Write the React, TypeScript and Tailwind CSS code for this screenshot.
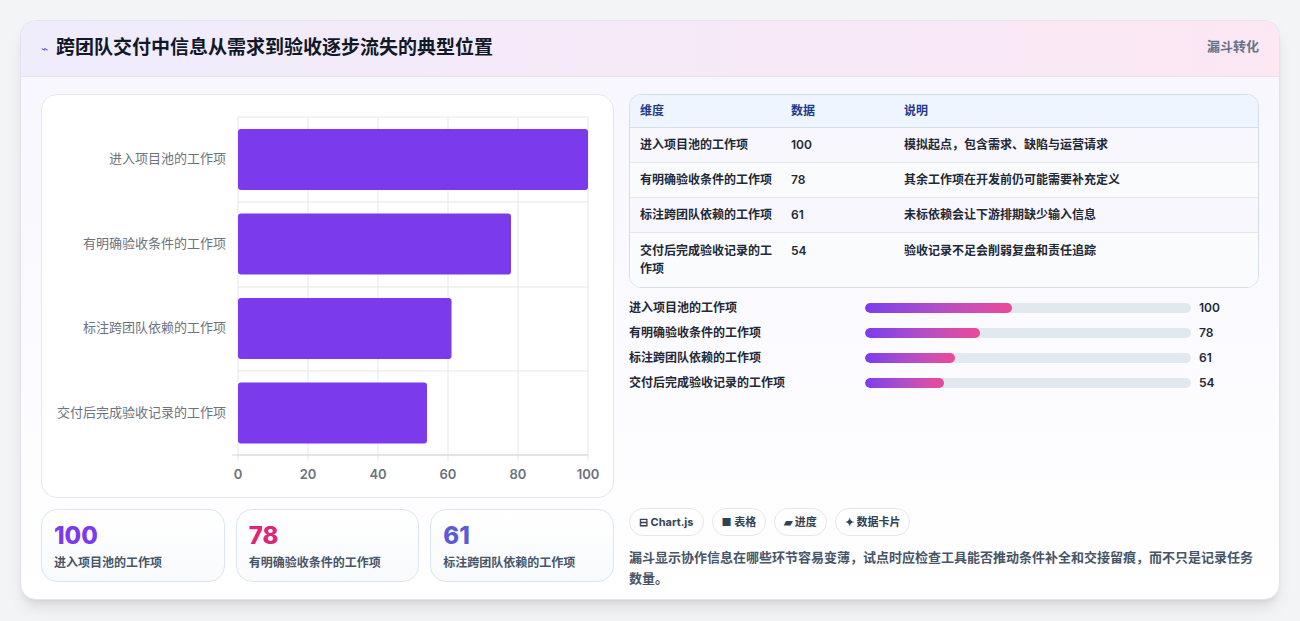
import React from "react";

const rows = [
  { k: "进入项目池的工作项", v: 100, d: "模拟起点，包含需求、缺陷与运营请求" },
  { k: "有明确验收条件的工作项", v: 78, d: "其余工作项在开发前仍可能需要补充定义" },
  { k: "标注跨团队依赖的工作项", v: 61, d: "未标依赖会让下游排期缺少输入信息" },
  { k: "交付后完成验收记录的工作项", v: 54, d: "验收记录不足会削弱复盘和责任追踪" },
];

function Chart() {
  const x0 = 196, w = 350;
  const hl = [22, 107, 192, 276, 360];
  return (
    <svg width="572" height="403" className="block">
      {[0, 20, 40, 60, 80, 100].map((t) => (
        <g key={t}>
          <line x1={x0 + (w * t) / 100} x2={x0 + (w * t) / 100} y1={22} y2={366} stroke="#e5e7eb" />
          <text x={x0 + (w * t) / 100} y={384} textAnchor="middle" fontSize="13" fontWeight="600" fill="#6b7280" fontFamily="Inter, 'Noto Sans CJK SC', sans-serif">{t}</text>
        </g>
      ))}
      {hl.map((y) => (
        <line key={y} x1={x0} x2={x0 + w} y1={y} y2={y} stroke="#e5e7eb" />
      ))}
      <line x1={x0 - 6} x2={x0 + w} y1={360} y2={360} stroke="#d1d5db" />
      {rows.map((r, i) => {
        const cy = 64 + i * 84.5;
        return (
          <g key={r.k}>
            <rect x={x0} y={cy - 30} width={(w * r.v) / 100} height={61} rx="3" fill="#7c3aed" />
            <text x={184} y={cy + 4} textAnchor="end" fontSize="13" fill="#6b7280" fontFamily="'Noto Sans CJK SC', sans-serif">{r.k}</text>
          </g>
        );
      })}
    </svg>
  );
}

export default function App() {
  return (
    <div className="w-[1300px] h-[621px] bg-[#f3f4f6] pt-5 px-5" style={{ fontFamily: "Inter, 'Noto Sans CJK SC', sans-serif" }}>
      <div className="w-[1260px] h-[580px] rounded-2xl bg-white border border-[#e5e1f5] shadow-lg overflow-hidden flex flex-col bg-gradient-to-b from-[#f7f5ff] to-white">
        <div className="h-[56px] flex items-center justify-between px-5 bg-gradient-to-r from-[#efecfc] to-[#fce7f3] border-b border-[#e7e3f4]">
          <div className="flex items-center gap-2">
            <span className="text-[#6366f1] text-xs">⌁</span>
            <span className="text-[19px] font-bold text-[#111827]">跨团队交付中信息从需求到验收逐步流失的典型位置</span>
          </div>
          <span className="text-[13px] font-bold text-[#64748b] self-start mt-4">漏斗转化</span>
        </div>
        <div className="flex gap-[15px] px-5 pt-[17px]">
          <div className="w-[573px] flex flex-col gap-[11px]">
            <div className="h-[404px] rounded-2xl border border-[#e5e7eb] bg-white overflow-hidden">
              <Chart />
            </div>
            <div className="grid grid-cols-3 gap-[11px]">
              {[
                { v: 100, c: "text-[#7c3aed]", l: "进入项目池的工作项" },
                { v: 78, c: "text-[#db2777]", l: "有明确验收条件的工作项" },
                { v: 61, c: "text-[#5b5bd6]", l: "标注跨团队依赖的工作项" },
              ].map((s) => (
                <div key={s.v} className="h-[73px] rounded-2xl border border-[#dbe5f3] bg-gradient-to-b from-white to-[#f8fafc] px-3 pt-3">
                  <div className={`text-[24px] leading-7 font-extrabold ${s.c}`}>{s.v}</div>
                  <div className="text-[12px] font-semibold text-[#475569] mt-1">{s.l}</div>
                </div>
              ))}
            </div>
          </div>
          <div className="w-[633px] flex flex-col">
            <div className="rounded-xl border border-[#d6dce8] overflow-hidden bg-white text-[12px] font-semibold text-[#1f2937]">
              <div className="flex h-[33px] items-center bg-[#eef5fe] border-b border-[#d6dce8] text-[#1e3a8a]">
                <div className="w-[151px] pl-[10px]">维度</div>
                <div className="w-[113px] pl-[10px]">数据</div>
                <div className="pl-[10px]">说明</div>
              </div>
              {rows.map((r, i) => (
                <div key={r.k} className={`flex border-b border-[#e5e7eb] last:border-b-0 ${i % 2 ? "bg-[#fafbfd]" : "bg-[#f8f7fd]"} ${i === 3 ? "h-[54px] pt-[9px]" : "h-[35px] items-center"}`}>
                  <div className="w-[151px] pl-[10px] pr-2 leading-[18px]">{r.k}</div>
                  <div className="w-[113px] pl-[10px] leading-[18px]">{r.v}</div>
                  <div className="pl-[10px] leading-[18px]">{r.d}</div>
                </div>
              ))}
            </div>
            <div className="flex flex-col gap-[8px] mt-[11px]">
              {rows.map((r) => (
                <div key={r.k} className="flex items-center h-[17px] text-[12px] font-semibold text-[#1f2937]">
                  <div className="w-[236px]">{r.k}</div>
                  <div className="w-[326px] h-[10px] rounded-full bg-[#e2e8f0] overflow-hidden">
                    <div className="h-full rounded-full bg-gradient-to-r from-[#7c3aed] to-[#ec4899]" style={{ width: `${r.v * 1.47}px` }} />
                  </div>
                  <div className="ml-2">{r.v}</div>
                </div>
              ))}
            </div>
            <div className="flex gap-2 mt-[117px]">
              {["⊟ Chart.js", "■ 表格", "▰ 进度", "✦ 数据卡片"].map((c) => (
                <span key={c} className="h-[28px] px-[9px] flex items-center rounded-full border border-[#e5e7eb] bg-white text-[11px] font-bold text-[#334155]">{c}</span>
              ))}
            </div>
            <p className="mt-[11px] text-[13px] leading-[21px] font-semibold text-[#475569]">漏斗显示协作信息在哪些环节容易变薄，试点时应检查工具能否推动条件补全和交接留痕，而不只是记录任务数量。</p>
          </div>
        </div>
      </div>
    </div>
  );
}
